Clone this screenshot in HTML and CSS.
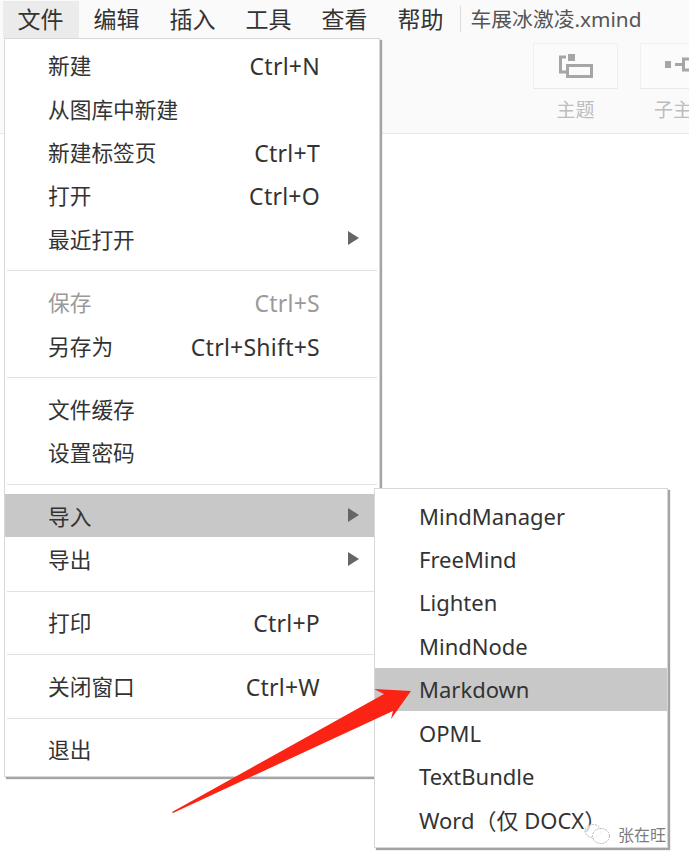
FILE: index.html
```html
<!doctype html>
<html lang="zh">
<head>
    <meta charset="utf-8">
    <title>车展冰激凌.xmind</title>
    <link rel="stylesheet" href="styles.css">
</head>
<body>
    <div class="menubar">
        <span class="top active">文件</span>
        <span class="top">编辑</span>
        <span class="top">插入</span>
        <span class="top">工具</span>
        <span class="top">查看</span>
        <span class="top">帮助</span>
        <span class="filename">车展冰激凌.xmind</span>
    </div>
    <div class="toolbar">
        <div class="tool">
            <div class="tool-box">
                <svg width="36" height="26" viewBox="0 0 36 26">
                    <rect x="10" y="1" width="7" height="7" fill="#a6a6a6"/>
                    <path d="M8 4H2.5V19H9" fill="none" stroke="#a6a6a6" stroke-width="3"/>
                    <rect x="9.5" y="12.5" width="24" height="11" fill="none" stroke="#a6a6a6" stroke-width="3"/>
                </svg>
            </div>
            <div class="tool-label">主题</div>
        </div>
        <div class="tool">
            <div class="tool-box">
                <svg width="36" height="26" viewBox="0 0 36 26">
                    <rect x="-1" y="8" width="7" height="7" fill="#a6a6a6"/>
                    <path d="M10 11.5H18" fill="none" stroke="#a6a6a6" stroke-width="3"/>
                    <rect x="18.5" y="6" width="24" height="11" fill="none" stroke="#a6a6a6" stroke-width="3"/>
                </svg>
            </div>
            <div class="tool-label">子主题</div>
        </div>
    </div>

    <div class="menu file-menu">
        <div class="group">
            <div class="row"><span>新建</span><span class="keys">Ctrl+N</span></div>
            <div class="row"><span>从图库中新建</span></div>
            <div class="row"><span>新建标签页</span><span class="keys">Ctrl+T</span></div>
            <div class="row"><span>打开</span><span class="keys">Ctrl+O</span></div>
            <div class="row more"><span>最近打开</span><i class="caret"></i></div>
        </div>
        <div class="group">
            <div class="row disabled"><span>保存</span><span class="keys">Ctrl+S</span></div>
            <div class="row"><span>另存为</span><span class="keys">Ctrl+Shift+S</span></div>
        </div>
        <div class="group">
            <div class="row"><span>文件缓存</span></div>
            <div class="row"><span>设置密码</span></div>
        </div>
        <div class="group">
            <div class="row more selected"><span>导入</span><i class="caret"></i></div>
            <div class="row more"><span>导出</span><i class="caret"></i></div>
        </div>
        <div class="group">
            <div class="row"><span>打印</span><span class="keys">Ctrl+P</span></div>
        </div>
        <div class="group">
            <div class="row"><span>关闭窗口</span><span class="keys">Ctrl+W</span></div>
        </div>
        <div class="group">
            <div class="row"><span>退出</span></div>
        </div>
    </div>

    <div class="menu import-menu">
        <div class="row">MindManager</div>
        <div class="row">FreeMind</div>
        <div class="row">Lighten</div>
        <div class="row">MindNode</div>
        <div class="row selected">Markdown</div>
        <div class="row">OPML</div>
        <div class="row">TextBundle</div>
        <div class="row">Word（仅 DOCX）</div>
    </div>

    <svg class="pointer" width="689" height="865" viewBox="0 0 689 865">
        <polygon points="172,812 384,694 374,689 411,691 391,719 393,711 173,813" fill="#fa2314"/>
    </svg>

    <div class="watermark">
        <svg width="28" height="22" viewBox="0 0 28 22">
            <ellipse cx="9" cy="8" rx="8" ry="6.5" fill="#fff" fill-opacity=".75" stroke="#b4b4b4" stroke-dasharray="2 1"/>
            <ellipse cx="17" cy="13" rx="8.5" ry="7.5" fill="#fff" fill-opacity=".75" stroke="#b4b4b4" stroke-dasharray="2 1"/>
        </svg>
        <span>张在旺</span>
    </div>
</body>
</html>
```

FILE: styles.css
```css
html, body {
    margin: 0;
    padding: 0;
    height: 865px;
    overflow: hidden;
    background: #fff;
}
body {
    position: relative;
    font-family: "Noto Sans", "Noto Sans CJK SC", sans-serif;
    color: #333;
}

.menubar {
    display: flex;
    align-items: center;
    height: 38px;
    padding-left: 2.5px;
    background: #fafafa;
    font-size: 23px;
}
.top {
    padding: 0 15px;
    line-height: 37px;
    height: 37px;
}
.top.active { background: #ebebeb; }
.filename {
    margin-left: 1px;
    padding-left: 10px;
    font-size: 20.8px;
    line-height: 26px;
    color: #555;
    border-left: 1px solid #ddd;
}

.toolbar {
    display: flex;
    gap: 22px;
    height: 96px;
    padding-left: 533px;
    padding-top: 5px;
    box-sizing: border-box;
    background: #fafafa;
    border-bottom: 1px solid #e8e8e8;
}
.tool { flex: none; width: 85px; text-align: center; }
.tool-box {
    display: flex;
    align-items: center;
    justify-content: center;
    height: 46px;
    background: #fbfbfb;
    border: 1px solid #f0f0f0;
    border-bottom-color: #e8e8e8;
    box-sizing: border-box;
    overflow: hidden;
}
.tool-label {
    margin-top: 8px;
    font-size: 19px;
    line-height: 26px;
    color: #bdbdbd;
    white-space: nowrap;
}

.menu {
    position: absolute;
    background: #fff;
    border: 1px solid #d8d8dc;
    box-shadow: 2px 2px 1px #a4a4a4;
    font-size: 22px;
    box-sizing: border-box;
}
.file-menu { left: 4px; top: 38px; width: 376px; height: 739px; padding-top: 4px; font-size: 21.7px; }
.import-menu { left: 374px; top: 488px; width: 294px; height: 360px; padding-top: 5px; }

.row {
    display: flex;
    align-items: center;
    justify-content: space-between;
    height: 43.4px;
    padding: 0 59px 0 43px;
    white-space: nowrap;
}
.row.more { padding-right: 20px; }
.row.disabled { color: #9a9a9a; }
.row.selected { background: #c8c8c8; }
.import-menu .row { padding: 0 0 0 44px; justify-content: flex-start; }
.keys { font-size: 23px; letter-spacing: .25px; padding-top: 3px; }

.group { padding-bottom: 11.5px; margin-bottom: 8.5px; position: relative; }
.group::after {
    content: "";
    position: absolute;
    left: 2px;
    right: 2px;
    bottom: 0;
    border-bottom: 1px solid #e2e2e2;
}
.group:last-child { padding-bottom: 0; margin-bottom: 0; }
.group:last-child::after { display: none; }

.caret {
    width: 0;
    height: 0;
    border-left: 11px solid #666;
    border-top: 7.5px solid transparent;
    border-bottom: 7.5px solid transparent;
}

.pointer { position: absolute; left: 0; top: 0; pointer-events: none; }

.watermark {
    position: absolute;
    left: 584px;
    top: 822px;
    display: flex;
    align-items: center;
    gap: 6px;
    font-size: 16px;
    color: #7c7c7c;
}
```
